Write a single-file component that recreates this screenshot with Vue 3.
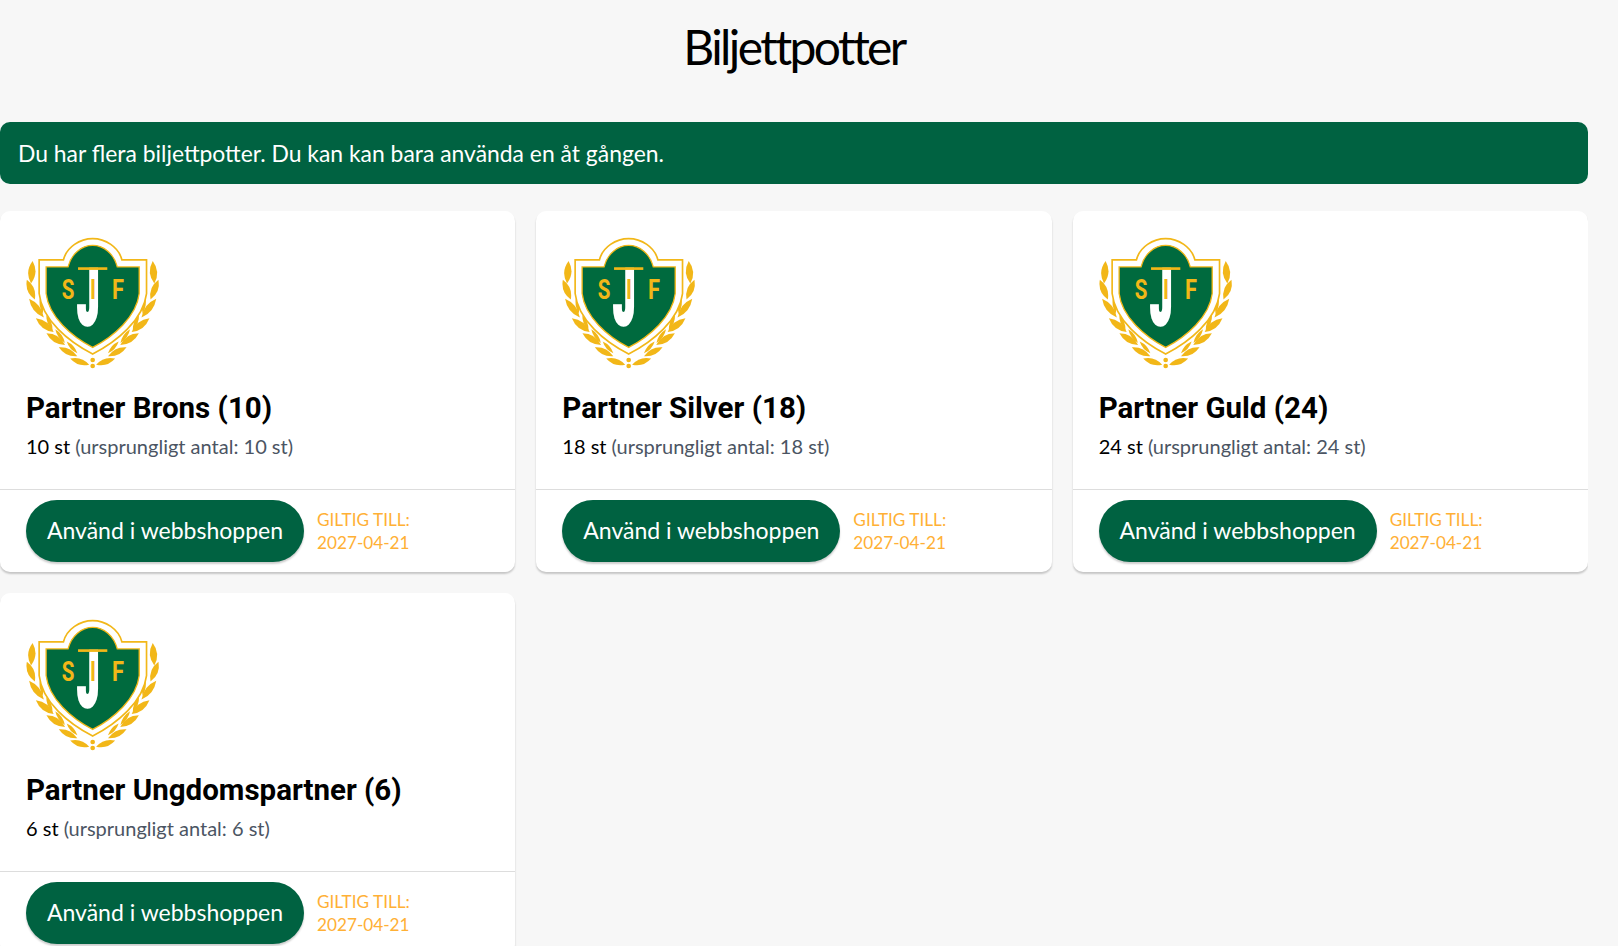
<script setup>
const pots = [
  { name: 'Partner Brons', count: 10 },
  { name: 'Partner Silver', count: 18 },
  { name: 'Partner Guld', count: 24 },
  { name: 'Partner Ungdomspartner', count: 6 },
];

// laurel leaves for the left side, the right side is mirrored
const leaves = [
  [95, 186, 68, 4, 22],
  [92, 238, 64, -22, 20],
  [109, 294, 72, -38, 20],
  [134, 345, 68, -52, 20],
  [167, 387, 66, -58, 20],
  [204, 425, 62, -64, 18],
  [239, 455, 60, -72, 18],
  [124, 285, 52, -8, 11],
  [148, 338, 50, -22, 11],
  [180, 378, 50, -35, 11],
  [216, 412, 48, -42, 11],
];

function leafPath(l) {
  const [x, y, len, , w] = l;
  const h = len / 2;
  return `M${x} ${y - h} Q${x + w} ${y} ${x} ${y + h} Q${x - w} ${y} ${x} ${y - h}Z`;
}
</script>

<template>
  <div class="page">
    <h1 class="title">Biljettpotter</h1>
    <div class="notice">Du har flera biljettpotter. Du kan kan bara använda en åt gången.</div>
    <div class="grid">
      <div v-for="pot in pots" :key="pot.name" class="card">
        <div class="card-body">
          <svg class="logo" viewBox="78 80 405 400" aria-label="Jönköpings Södra IF">
            <g v-for="side in ['', 'translate(556 0) scale(-1 1)']" :key="side" :transform="side" fill="#f2b718">
              <path
                v-for="(l, i) in leaves"
                :key="i"
                :d="leafPath(l)"
                :transform="`rotate(${l[3]} ${l[0]} ${l[1]})`"
              />
            </g>
            <path d="M117 149H190C200 110 240 85 278 85C316 85 356 110 366 149H440V250C430 330 350 395 278 432C206 395 126 330 117 250Z" fill="#fff" stroke="#f2b718" stroke-width="5" />
            <path d="M138 170H204C214 130 245 105 278 105C311 105 342 130 352 170H418V250C410 320 340 380 278 412C216 380 146 320 138 250Z" fill="#006a3e" stroke="#f2b718" stroke-width="4" />
            <circle cx="278" cy="450" r="7" fill="#f2b718" />
            <circle cx="278" cy="468" r="7" fill="#f2b718" />
            <text x="185" y="265" class="logo-letter" textLength="38" lengthAdjust="spacingAndGlyphs" fill="#f2b718">S</text>
            <text x="336" y="265" class="logo-letter" textLength="36" lengthAdjust="spacingAndGlyphs" fill="#f2b718">F</text>
            <text x="234" y="340" class="logo-j" textLength="62" lengthAdjust="spacingAndGlyphs" fill="#fff" stroke="#fff" stroke-width="20">J</text>
            <rect x="234" y="171" width="88" height="8" fill="#f2b718" />
            <text x="270" y="265" class="logo-letter" textLength="18" lengthAdjust="spacingAndGlyphs" fill="#f2b718">I</text>
          </svg>
          <h2 class="pot-name">{{ pot.name }} ({{ pot.count }})</h2>
          <p class="pot-count">{{ pot.count }} st <span class="muted">(ursprungligt antal: {{ pot.count }} st)</span></p>
        </div>
        <div class="card-footer">
          <button class="use-btn">Använd i webbshoppen</button>
          <div class="valid">GILTIG TILL:<br />2027-04-21</div>
        </div>
      </div>
    </div>
  </div>
</template>

<style>
html, body {
  margin: 0;
  background: #f7f7f7;
  overflow: hidden;
}
</style>

<style scoped>
.page {
  width: 1588px;
  height: 946px;
  overflow: hidden;
  font-family: Lato, "Open Sans", sans-serif;
}
.title {
  margin: 0;
  padding-top: 17px;
  height: 122px;
  box-sizing: border-box;
  text-align: center;
  font-size: 48px;
  line-height: 60px;
  font-weight: 400;
  letter-spacing: -2.6px;
  color: #000;
}
.notice {
  height: 62px;
  line-height: 62px;
  padding-left: 18px;
  background: #006241;
  color: #fff;
  border-radius: 10px;
  font-size: 22.9px;
}
.grid {
  display: grid;
  grid-template-columns: repeat(3, 1fr);
  gap: 21px;
  margin-top: 27px;
  align-items: start;
}
.card {
  background: #fff;
  border-radius: 10px;
  box-shadow: 0 2px 2px rgba(0, 0, 0, 0.2);
}
.card-body {
  height: 279px;
  box-sizing: border-box;
  padding: 26px 26px 0;
  border-bottom: 1px solid #ddd;
}
.logo {
  display: block;
  width: 135px;
  height: 133px;
}
.pot-name {
  margin: 19px 0 0;
  font-family: Roboto, sans-serif;
  font-size: 29.5px;
  line-height: 38px;
  font-weight: 700;
  color: #000;
}
.pot-count {
  margin: 4px 0 0;
  font-size: 20px;
  line-height: 30px;
  color: #000;
}
.muted {
  color: #4b5563;
}
.card-footer {
  display: flex;
  align-items: center;
  gap: 13px;
  padding: 10px 26px;
}
.use-btn {
  width: 278px;
  height: 62px;
  padding: 0 0 3px;
  border: none;
  border-radius: 31px;
  background: #006241;
  color: #fff;
  font-family: inherit;
  font-size: 23px;
  box-shadow: 0 2px 2px rgba(0, 0, 0, 0.2);
}
.valid {
  font-size: 17.2px;
  line-height: 23px;
  color: #ffb035;
}
.logo-letter {
  font-family: Roboto, sans-serif;
  font-weight: 700;
  font-size: 82px;
}
.logo-j {
  font-family: Roboto, sans-serif;
  font-weight: 700;
  font-size: 220px;
}
</style>
